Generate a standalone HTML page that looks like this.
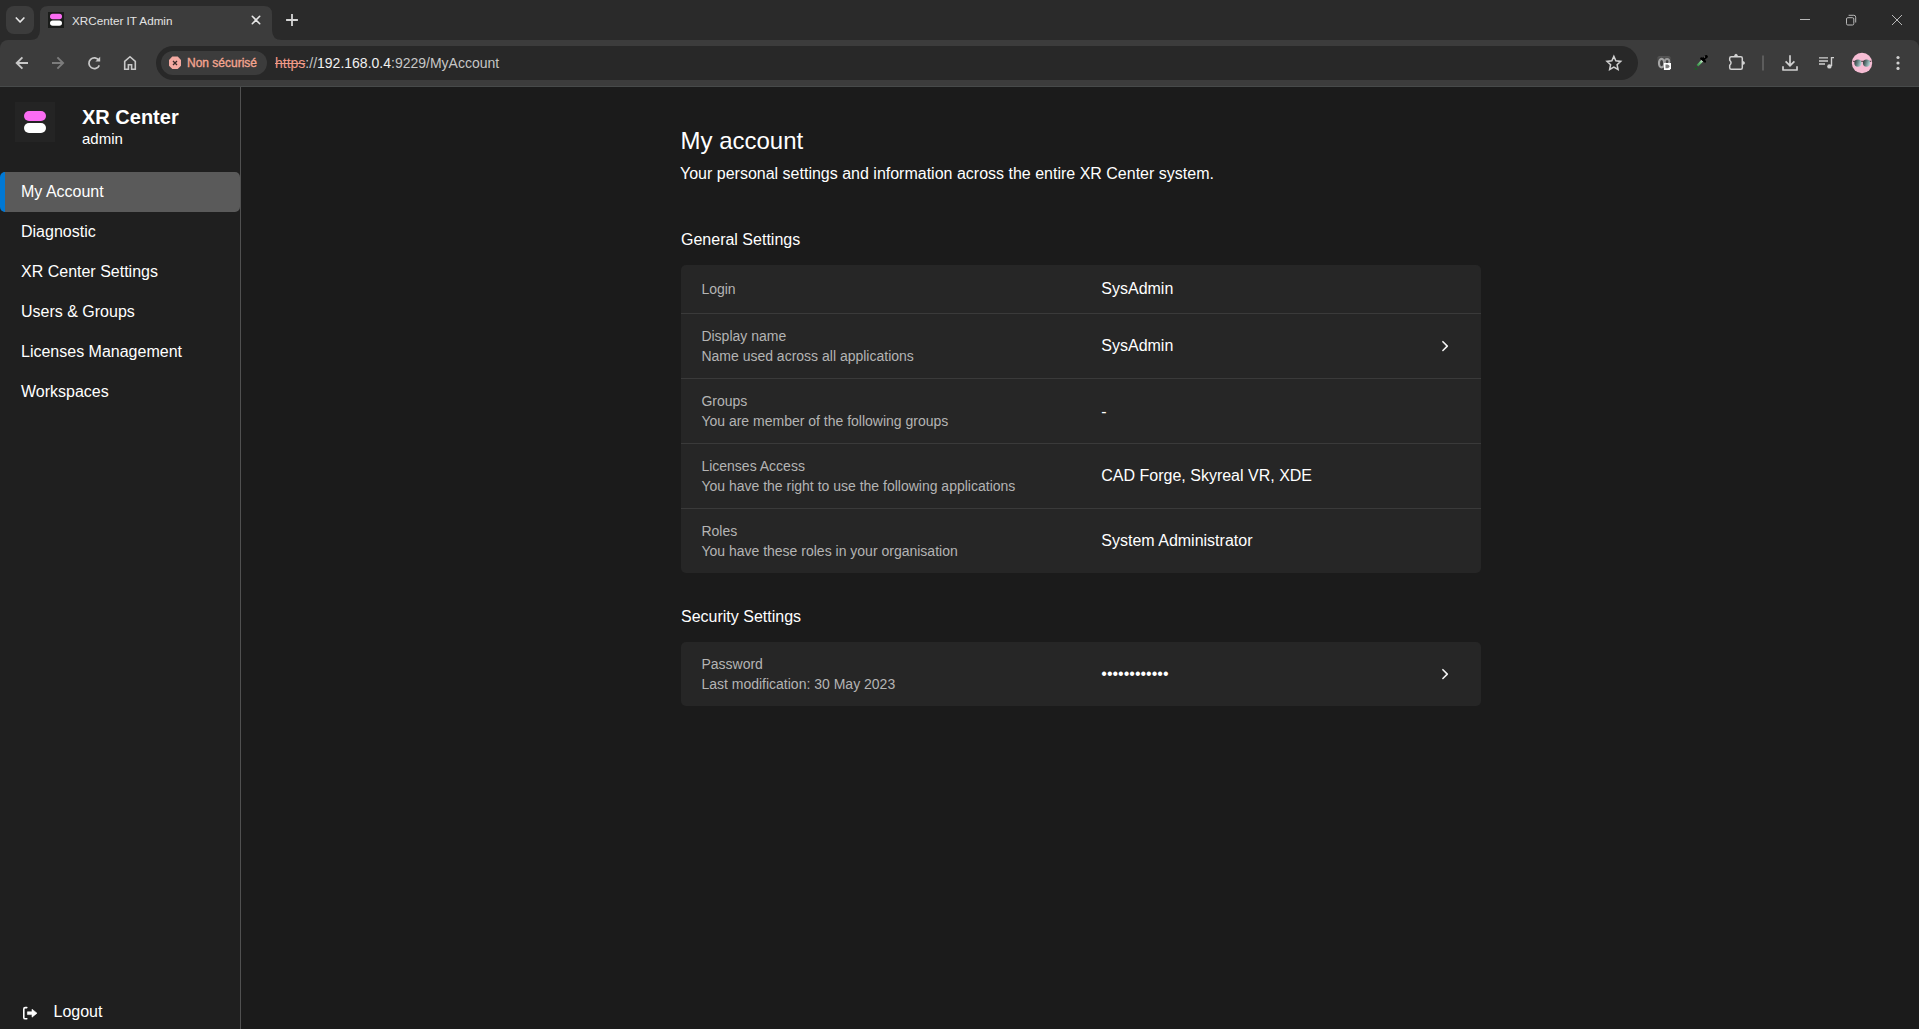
<!DOCTYPE html>
<html><head><meta charset="utf-8">
<style>
*{box-sizing:border-box;margin:0;padding:0}
html,body{width:1919px;height:1029px;overflow:hidden;background:#2a2a2a;font-family:"Liberation Sans",sans-serif;color:#fff}
.abs{position:absolute}
/* chrome */
#frame{position:absolute;left:0;top:0;width:1919px;height:40px;background:#2a2a2a}
#tabdd{left:6px;top:6px;width:28px;height:28px;border-radius:8px;background:#3c3c3c}
#tab{left:40px;top:6px;width:232px;height:34px;background:#3c3c3c;border-radius:10px 10px 0 0}
#toolbar{left:0;top:40px;width:1919px;height:46px;background:#3c3c3c;border-radius:8px 8px 0 0}
#tbline{left:0;top:86px;width:1919px;height:1px;background:#474a4a}
#omni{left:156px;top:46px;width:1482px;height:34px;border-radius:17px;background:#282828}
#chip{left:161px;top:51px;width:106px;height:24px;border-radius:12px;background:#3c3c3c}
.tt{font-size:12px;color:#e3e3e3;white-space:nowrap}
/* page */
#sidebar{left:0;top:87px;width:241px;height:942px;background:#1f1f1f;border-right:1px solid #505050}
#main{left:241px;top:87px;width:1678px;height:942px;background:#1b1b1b}
.nav{position:absolute;left:0;width:240px;height:40px;font-size:16px;line-height:40px;padding-left:21px;color:#fff;white-space:nowrap}
.nav.active{background:#5a5a5a;border-radius:5px;border-left:5px solid #0078d4;padding-left:16px}
.card{position:absolute;left:681px;width:800px;background:#262626;border-radius:5px}
.row{position:relative;border-top:1px solid #3a3a3a}
.row:first-child{border-top:none}
.lab{position:absolute;left:20.4px;font-size:14px;line-height:20px;color:#b4b4b4;white-space:nowrap}
.val{position:absolute;left:420.3px;font-size:16px;line-height:24px;color:#fff;white-space:nowrap}
.chev{position:absolute;left:760px}
</style></head>
<body>
<div id="frame"></div>
<!-- tab dropdown -->
<div class="abs" id="tabdd"></div>
<svg class="abs" style="left:0;top:0" width="320" height="46" viewBox="0 0 320 46">
  <path d="M16.3 18 L20.1 22 L23.9 18" fill="none" stroke="#e6e6e6" stroke-width="1.7" stroke-linecap="round" stroke-linejoin="round"/>
  <!-- tab shape with flares -->
  <path d="M30 40 Q40 40 40 30 L40 14 Q40 6 48 6 L264 6 Q272 6 272 14 L272 30 Q272 40 282 40 Z" fill="#3c3c3c"/>
  <!-- favicon -->
  <rect x="48" y="12" width="16" height="16" fill="#1a1c1a"/>
  <rect x="50" y="13.8" width="12" height="5.4" rx="2.7" fill="#fb6cf3"/>
  <rect x="50" y="20.4" width="12" height="5.4" rx="2.7" fill="#ffffff"/>
  <!-- close x -->
  <path d="M252.3 16.3 L259.7 23.7 M259.7 16.3 L252.3 23.7" stroke="#e6e6e6" stroke-width="1.6" stroke-linecap="round"/>
  <!-- plus -->
  <path d="M292 15 L292 25 M287 20 L297 20" stroke="#d6d6d6" stroke-width="1.8" stroke-linecap="square"/>
</svg>
<div class="abs tt" style="left:72px;top:12.5px;line-height:15px;font-size:11.7px">XRCenter IT Admin</div>
<!-- window controls -->
<svg class="abs" style="left:1780px;top:0" width="139" height="40" viewBox="1780 0 139 40">
  <path d="M1800 19.5 L1810 19.5" stroke="#b8b8b8" stroke-width="1"/>
  <rect x="1846.5" y="17.7" width="7.3" height="7.3" rx="1.3" fill="none" stroke="#b8b8b8" stroke-width="1"/>
  <path d="M1848.6 15.3 L1853.8 15.3 Q1855.7 15.3 1855.7 17.2 L1855.7 22.5" fill="none" stroke="#b8b8b8" stroke-width="1"/>
  <path d="M1892 15 L1902 25 M1902 15 L1892 25" stroke="#b8b8b8" stroke-width="1"/>
</svg>
<!-- toolbar -->
<div class="abs" id="toolbar"></div>
<div class="abs" id="tbline"></div>
<svg class="abs" style="left:0;top:40px" width="150" height="46" viewBox="0 40 150 46">
  <!-- back -->
  <path d="M16.8 63 L28 63 M22.4 57.3 L16.7 63 L22.4 68.7" fill="none" stroke="#c8c8c8" stroke-width="1.9" stroke-linecap="butt" stroke-linejoin="miter"/>
  <!-- forward -->
  <path d="M52 63 L63 63 M57.4 57.3 L63.1 63 L57.4 68.7" fill="none" stroke="#7c7c7c" stroke-width="1.9" stroke-linejoin="miter"/>
  <!-- reload -->
  <path d="M98.9 60.3 A5.4 5.4 0 1 0 99.3 65.3" fill="none" stroke="#c8c8c8" stroke-width="1.7"/>
  <path d="M95.4 61.5 L100.2 61.5 L100.2 56.8 Z" fill="#c8c8c8"/>
  <!-- home -->
  <path d="M124.7 69.3 L124.7 61.3 L130 56.7 L135.3 61.3 L135.3 69.3 L131.6 69.3 L131.6 64.7 L128.4 64.7 L128.4 69.3 Z" fill="none" stroke="#c8c8c8" stroke-width="1.6" stroke-linejoin="miter"/>
</svg>
<div class="abs" id="omni"></div>
<div class="abs" id="chip"></div>
<svg class="abs" style="left:165px;top:53px" width="20" height="20" viewBox="165 53 20 20">
  <path d="M172.3 56.6 L177.7 56.6 L181 59.9 L181 65.7 L177.7 69 L172.3 69 L169 65.7 L169 59.9 Z" fill="#f4aaa2"/>
  <path d="M173 61 L177 65 M177 61 L173 65" stroke="#3a2a28" stroke-width="1.3"/>
</svg>
<div class="abs" style="left:187px;top:56px;font-size:12px;line-height:15px;-webkit-text-stroke:0.35px #f4a590;color:#f4a590;white-space:nowrap">Non sécurisé</div>
<div class="abs" style="left:275px;top:55px;font-size:14px;line-height:16px;white-space:nowrap;color:#c6c6c6"><span style="color:#f09a88;text-decoration:line-through">https</span>://<span style="color:#f0f0f0">192.168.0.4</span>:9229/MyAccount</div>
<!-- right toolbar icons -->
<svg class="abs" style="left:1590px;top:40px" width="329" height="46" viewBox="1590 40 329 46">
  <!-- star -->
  <path d="M1613.85 56.40 L1615.85 60.85 L1620.70 61.38 L1617.08 64.65 L1618.08 69.42 L1613.85 67.00 L1609.62 69.42 L1610.62 64.65 L1607.00 61.38 L1611.85 60.85 Z" fill="none" stroke="#d0d0d0" stroke-width="1.5" stroke-linejoin="miter"/>
  <!-- ext1 -->
  <defs><linearGradient id="ext1g" x1="0" y1="0" x2="0" y2="1"><stop offset="0" stop-color="#575757"/><stop offset="0.55" stop-color="#3c3c3c"/></linearGradient></defs>
  <rect x="1657.3" y="55.9" width="13.4" height="13.5" rx="2.5" fill="url(#ext1g)"/>
  <ellipse cx="1661.6" cy="63.1" rx="2.6" ry="4.3" fill="none" stroke="#a6a6a6" stroke-width="2.2"/>
  <ellipse cx="1667.1" cy="61.6" rx="2.3" ry="2.6" fill="none" stroke="#9c9c9c" stroke-width="1.8"/>
  <path d="M1663.9 62.9 L1671 62.9 L1671 68.6 L1669.7 69.9 L1663.9 69.9 Z" fill="#ffffff"/>
  <path d="M1665.5 64.6 L1667.6 64.6 Q1669.4 65.3 1669.6 66.4 Q1669.4 67.5 1667.6 68.2 L1665.5 68.2 Z" fill="#7c7c7c"/>
  <!-- eyedropper -->
  <defs><linearGradient id="tubeg" x1="1697" y1="66" x2="1702.5" y2="60" gradientUnits="userSpaceOnUse"><stop offset="0" stop-color="#2e8a3e"/><stop offset="0.55" stop-color="#6cc07a"/><stop offset="1" stop-color="#e8f2e8"/></linearGradient></defs>
  <circle cx="1695.9" cy="68.7" r="1.3" fill="#1f5a28"/>
  <path d="M1697.4 65.8 L1702.3 60.6" stroke="url(#tubeg)" stroke-width="2.3" stroke-linecap="butt"/>
  <path d="M1701.3 58.4 L1704.9 61.4" stroke="#000" stroke-width="2.4" stroke-linecap="round"/>
  <path d="M1703.3 58.9 L1706.3 56.6" stroke="#000" stroke-width="3.2" stroke-linecap="round"/>
  <circle cx="1704.4" cy="57" r="0.8" fill="#777"/>
  <!-- puzzle -->
  <path d="M1731.2 56.7 L1740.8 56.7 Q1742.3 56.7 1742.3 58.2 L1742.3 67.7 Q1742.3 69.2 1740.8 69.2 L1731.2 69.2 Q1729.7 69.2 1729.7 67.7 L1729.7 65.3 Q1732.4 62.8 1729.7 60.2 L1729.7 58.2 Q1729.7 56.7 1731.2 56.7 Z" fill="none" stroke="#d2d2d2" stroke-width="1.5" stroke-linejoin="round"/>
  <path d="M1733.8 56.5 Q1734.6 53.8 1736 53.8 Q1737.4 53.8 1738.2 56.5 Z" fill="#d2d2d2"/>
  <path d="M1742.5 60.8 Q1745 61.6 1745 62.9 Q1745 64.2 1742.5 65 Z" fill="#d2d2d2"/>
  <!-- separator -->
  <rect x="1762.3" y="55.5" width="1.4" height="15" fill="#6a6a6a"/>
  <!-- download -->
  <path d="M1790 55.3 L1790 65.5 M1785.6 61.3 L1790 65.7 L1794.4 61.3" fill="none" stroke="#d0d0d0" stroke-width="1.7" stroke-linejoin="miter"/>
  <path d="M1783 66.2 L1783 70 L1797 70 L1797 66.2" fill="none" stroke="#d0d0d0" stroke-width="1.7" stroke-linejoin="round"/>
  <!-- playlist -->
  <path d="M1819 57.9 L1828 57.9 M1819 61 L1828 61 M1819 64 L1825 64" stroke="#d0d0d0" stroke-width="1.3"/>
  <path d="M1831.5 66 L1831.5 57.6 L1834 57.6" fill="none" stroke="#d0d0d0" stroke-width="1.4"/>
  <circle cx="1829.4" cy="66.4" r="2.2" fill="#d0d0d0"/>
  <!-- avatar -->
  <defs><linearGradient id="lensg" x1="0" y1="0" x2="1" y2="0.3"><stop offset="0" stop-color="#2b2b2b"/><stop offset="0.5" stop-color="#5f7a7a"/><stop offset="1" stop-color="#a9cccc"/></linearGradient></defs>
  <circle cx="1862" cy="63" r="10.2" fill="#f6bdd4"/>
  <path d="M1853 61.3 L1871.2 61.3" stroke="#3a2b2e" stroke-width="0.9"/>
  <circle cx="1857.9" cy="63.1" r="3.6" fill="url(#lensg)"/>
  <circle cx="1866.5" cy="63.1" r="3.6" fill="url(#lensg)"/>
  <!-- kebab -->
  <circle cx="1898" cy="57.5" r="1.6" fill="#d0d0d0"/>
  <circle cx="1898" cy="63" r="1.6" fill="#d0d0d0"/>
  <circle cx="1898" cy="68.4" r="1.6" fill="#d0d0d0"/>
</svg>
<div class="abs" id="sidebar"></div>
<div class="abs" id="main"></div>

<!-- sidebar -->
<div class="abs" style="left:15px;top:102px;width:40px;height:40px;background:#242424"></div>
<div class="abs" style="left:24px;top:111px;width:22px;height:10px;border-radius:5px;background:#fb6cf3"></div>
<div class="abs" style="left:24px;top:123px;width:22px;height:10px;border-radius:5px;background:#fff"></div>
<div class="abs" style="left:82px;top:105px;font-size:20px;line-height:24px;font-weight:bold;white-space:nowrap">XR Center</div>
<div class="abs" style="left:82px;top:129px;font-size:15px;line-height:20px;white-space:nowrap">admin</div>

<div class="nav active" style="top:172px">My Account</div>
<div class="nav" style="top:212px">Diagnostic</div>
<div class="nav" style="top:252px">XR Center Settings</div>
<div class="nav" style="top:292px">Users &amp; Groups</div>
<div class="nav" style="top:332px">Licenses Management</div>
<div class="nav" style="top:372px">Workspaces</div>

<div class="abs" style="left:53.5px;top:992px;font-size:16px;line-height:40px;white-space:nowrap">Logout</div>

<!-- main -->
<div class="abs" style="left:680.5px;top:125px;font-size:24px;line-height:32px;white-space:nowrap">My account</div>
<div class="abs" style="left:680px;top:162px;font-size:16px;line-height:24px;white-space:nowrap">Your personal settings and information across the entire XR Center system.</div>
<div class="abs" style="left:681px;top:228px;font-size:16px;line-height:24px;white-space:nowrap">General Settings</div>

<div class="card" style="top:265px;height:308px">
  <div class="row" style="height:48px"><div class="lab" style="top:14px">Login</div><div class="val" style="top:12px">SysAdmin</div></div>
  <div class="row" style="height:65px"><div class="lab" style="top:12px">Display name</div><div class="lab" style="top:32px">Name used across all applications</div><div class="val" style="top:20px">SysAdmin</div></div>
  <div class="row" style="height:65px"><div class="lab" style="top:12px">Groups</div><div class="lab" style="top:32px">You are member of the following groups</div><div class="val" style="top:21px">-</div></div>
  <div class="row" style="height:65px"><div class="lab" style="top:12px">Licenses Access</div><div class="lab" style="top:32px">You have the right to use the following applications</div><div class="val" style="top:20px">CAD Forge, Skyreal VR, XDE</div></div>
  <div class="row" style="height:65px"><div class="lab" style="top:12px">Roles</div><div class="lab" style="top:32px">You have these roles in your organisation</div><div class="val" style="top:20px">System Administrator</div></div>
</div>

<div class="abs" style="left:681px;top:605px;font-size:16px;line-height:24px;white-space:nowrap">Security Settings</div>
<div class="card" style="top:642px;height:64px">
  <div class="row" style="height:64px"><div class="lab" style="top:12px">Password</div><div class="lab" style="top:32px">Last modification: 30 May 2023</div><div class="val" style="top:20px">••••••••••••</div></div>
</div>

<svg class="abs" style="left:1430px;top:330px" width="30" height="360" viewBox="1430 330 30 360">
  <path d="M1442.9 341.7 L1447.3 346.1 L1442.9 350.5" fill="none" stroke="#f2f2f2" stroke-width="1.6" stroke-linecap="round" stroke-linejoin="round"/>
  <path d="M1442.9 669.7 L1447.3 674.1 L1442.9 678.5" fill="none" stroke="#f2f2f2" stroke-width="1.6" stroke-linecap="round" stroke-linejoin="round"/>
</svg>
<svg class="abs" style="left:18px;top:1000px" width="26" height="26" viewBox="18 1000 26 26">
  <path d="M26.8 1007.6 L25.2 1007.6 Q23.8 1007.6 23.8 1009 L23.8 1017.4 Q23.8 1018.8 25.2 1018.8 L26.8 1018.8" fill="none" stroke="#ffffff" stroke-width="1.6" stroke-linecap="round"/>
  <path d="M27.4 1011.8 L32 1011.8 L32 1009.2 L37 1013.2 L32 1017.2 L32 1014.6 L27.4 1014.6 Z" fill="#ffffff" stroke="#ffffff" stroke-width="0.6" stroke-linejoin="round"/>
</svg>
</body></html>
